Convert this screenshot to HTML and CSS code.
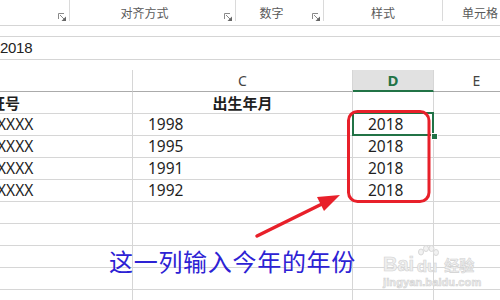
FILE: index.html
```html
<!DOCTYPE html>
<html lang="zh">
<head>
<meta charset="utf-8">
<link rel="stylesheet" href="styles.css">
</head>
<body>
<div class="page">
  <div class="ribbon">
    <div class="group g1"><span class="label"></span><span class="launch"><svg width="8" height="8" viewBox="0 0 8 8"><path d="M0.5 6V0.5H6" fill="none" stroke="#8a8a8a"/><path d="M2 2L6 6" stroke="#8a8a8a"/><path d="M8 3.5V8H3.5Z" fill="#666"/></svg></span></div>
    <div class="group g2"><span class="label">对齐方式</span><span class="launch"><svg width="8" height="8" viewBox="0 0 8 8"><path d="M0.5 6V0.5H6" fill="none" stroke="#8a8a8a"/><path d="M2 2L6 6" stroke="#8a8a8a"/><path d="M8 3.5V8H3.5Z" fill="#666"/></svg></span></div>
    <div class="group g3"><span class="label">数字</span><span class="launch"><svg width="8" height="8" viewBox="0 0 8 8"><path d="M0.5 6V0.5H6" fill="none" stroke="#8a8a8a"/><path d="M2 2L6 6" stroke="#8a8a8a"/><path d="M8 3.5V8H3.5Z" fill="#666"/></svg></span></div>
    <div class="group g4"><span class="label">样式</span></div>
    <div class="group g5"><span class="label">单元格</span></div>
  </div>

  <div class="formula">2018</div>

  <div class="sheet">
    <div class="cell hd"></div>
    <div class="cell hd">C</div>
    <div class="cell hd active">D</div>
    <div class="cell hd">E</div>

    <div class="cell first bold"><span class="shift-id">身份证号</span></div>
    <div class="cell center bold">出生年月</div>
    <div class="cell"></div>
    <div class="cell"></div>

    <div class="cell first"><span class="shift-x">XXXX</span></div>
    <div class="cell year">1998</div>
    <div class="cell now selected">2018<span class="handle"></span></div>
    <div class="cell"></div>

    <div class="cell first"><span class="shift-x">XXXX</span></div>
    <div class="cell year">1995</div>
    <div class="cell now">2018</div>
    <div class="cell"></div>

    <div class="cell first"><span class="shift-x">XXXX</span></div>
    <div class="cell year">1991</div>
    <div class="cell now">2018</div>
    <div class="cell"></div>

    <div class="cell first"><span class="shift-x">XXXX</span></div>
    <div class="cell year">1992</div>
    <div class="cell now">2018</div>
    <div class="cell"></div>

    <div class="cell"></div><div class="cell"></div><div class="cell"></div><div class="cell"></div>
    <div class="cell"></div><div class="cell"></div><div class="cell"></div><div class="cell"></div>
    <div class="cell"></div><div class="cell"></div><div class="cell"></div><div class="cell"></div>
    <div class="cell"></div><div class="cell"></div><div class="cell"></div><div class="cell"></div>
    <div class="cell"></div><div class="cell"></div><div class="cell"></div><div class="cell"></div>
    <div class="cell"></div><div class="cell"></div><div class="cell"></div><div class="cell"></div>
  </div>

  <svg class="annot" width="500" height="300" viewBox="0 0 500 300">
    <rect x="348.5" y="111.5" width="80.5" height="90" rx="9" ry="9" fill="none" stroke="#e8202a" stroke-width="3"/>
    <line x1="257" y1="236" x2="326" y2="202" stroke="#e8202a" stroke-width="3.5" stroke-linecap="round"/>
    <polygon points="340,195 317,197 324,211" fill="#e8202a"/>
  </svg>

  <div class="note">这一列输入今年的年份</div>

  <div class="wm">
    <div class="wm-top">
      <span class="wm-bai">Bai</span>
      <span class="wm-paw">
        <svg width="24" height="16" viewBox="0 0 24 16">
          <ellipse cx="6" cy="7" rx="2.5" ry="3" fill="#f2f2f2" stroke="#d8d8d8"/>
          <ellipse cx="11" cy="3.5" rx="2.5" ry="3" fill="#f2f2f2" stroke="#d8d8d8"/>
          <ellipse cx="16.5" cy="3.5" rx="2.5" ry="3" fill="#f2f2f2" stroke="#d8d8d8"/>
          <ellipse cx="21" cy="7.5" rx="2.5" ry="3" fill="#f2f2f2" stroke="#d8d8d8"/>
        </svg>
        <span class="wm-du">du</span>
      </span>
      <span class="wm-jy">经验</span>
    </div>
    <div class="wm-url">jingyan.baidu.com</div>
  </div>
</div>
</body>
</html>
```

FILE: styles.css
```css
html, body {
  margin: 0;
  padding: 0;
  background: #ffffff;
}

.page {
  position: relative;
  width: 500px;
  height: 300px;
  overflow: hidden;
  font-family: "Noto Sans", "Noto Sans CJK SC", sans-serif;
}

/* Ribbon */
.ribbon {
  display: flex;
  height: 26px;
  box-sizing: border-box;
  border-bottom: 1px solid #d5d5d5;
  align-items: flex-start;
}

.group {
  display: flex;
  align-items: flex-end;
  height: 21px;
  box-sizing: border-box;
  border-right: 1px solid #dadada;
}

.g1 { width: 70px; }
.g2 { width: 166px; }
.g3 { width: 88px; }
.g4 { width: 119px; }
.g5 { flex: 1; border-right: none; }

.label {
  flex: 1;
  text-align: center;
  font-family: "Noto Sans CJK SC", sans-serif;
  font-size: 12px;
  line-height: 14px;
  color: #5a5a5a;
  padding-bottom: 1px;
}

.g5 .label {
  text-align: left;
  padding-left: 19px;
}

.launch {
  width: 16px;
  box-sizing: border-box;
  padding-left: 5px;
  display: flex;
  align-items: flex-end;
  height: 8px;
}

.launch svg { display: block; }

/* Formula bar */
.formula {
  margin-top: 10px;
  margin-bottom: 10px;
  height: 24px;
  box-sizing: border-box;
  border-top: 1px solid #d5d5d5;
  border-bottom: 1px solid #d5d5d5;
  font-family: "Liberation Sans", sans-serif;
  font-size: 15px;
  line-height: 22px;
  color: #222;
  letter-spacing: -0.3px;
}

/* Sheet */
.sheet {
  display: grid;
  grid-template-columns: 133px 220px 81px 1fr;
  grid-auto-rows: 22px;
  width: 520px;
}

.cell {
  position: relative;
  box-sizing: border-box;
  border-right: 1px solid #d6d6d6;
  border-bottom: 1px solid #d6d6d6;
  font-family: "Noto Sans", "Noto Sans CJK SC", sans-serif;
  font-size: 15.5px;
  line-height: 21px;
  color: #1f1f1f;
  white-space: nowrap;
  overflow: hidden;
}

.hd {
  border-bottom-color: #ababab;
  text-align: center;
  font-size: 14px;
  color: #444;
  line-height: 21px;
}

.hd.active {
  background: #e1e1e1;
  border-bottom: 2px solid #217346;
  color: #217346;
  font-weight: bold;
  font-size: 15px;
  line-height: 20px;
}

.bold {
  font-family: "Noto Sans CJK SC", sans-serif;
  font-weight: bold;
  font-size: 15px;
}

.center { text-align: center; }

.shift-id {
  display: inline-block;
  margin-left: -40px;
}

.shift-x {
  display: inline-block;
  margin-left: -3px;
}

.year { padding-left: 15px; }
.now { padding-left: 15px; }

.selected { overflow: visible; }

.selected::after {
  content: "";
  position: absolute;
  left: -1px;
  top: -2px;
  width: 82px;
  height: 24px;
  box-sizing: border-box;
  border: 2px solid #217346;
}

.handle {
  position: absolute;
  left: 78px;
  top: 19px;
  width: 5px;
  height: 5px;
  background: #217346;
  border: 1px solid #fff;
  z-index: 2;
}

/* Annotations */
.annot {
  position: absolute;
  left: 0;
  top: 0;
}

.note {
  position: absolute;
  left: 109px;
  top: 245px;
  font-family: "Noto Sans CJK SC", sans-serif;
  font-size: 24px;
  letter-spacing: 0.7px;
  line-height: 32px;
  color: #2d22d4;
}

/* Watermark */
.wm {
  position: absolute;
  left: 383px;
  top: 243px;
  color: #efefef;
  -webkit-text-stroke: 0.6px #d2d2d2;
  font-family: "Liberation Sans", sans-serif;
  font-weight: bold;
}

.wm-top {
  display: flex;
  align-items: flex-end;
  height: 31px;
}

.wm-bai {
  font-size: 20px;
  line-height: 20px;
}

.wm-paw {
  display: flex;
  flex-direction: column;
  align-items: center;
  width: 26px;
}

.wm-du {
  font-size: 17px;
  line-height: 15px;
  margin-top: -2px;
}

.wm-jy {
  font-family: "Noto Sans CJK SC", sans-serif;
  font-size: 15px;
  line-height: 18px;
  margin-left: 4px;
}

.wm-url {
  font-size: 11px;
  line-height: 12px;
  margin-top: 2px;
  letter-spacing: 0.1px;
}
```
